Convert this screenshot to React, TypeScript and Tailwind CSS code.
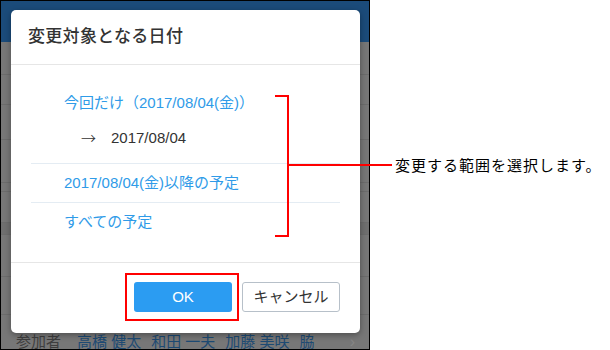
import React from "react";

const jp = { fontFamily: '"Liberation Sans", "Noto Sans CJK JP", sans-serif' };

const bgRows = [33, 30, 35, 43, 9, 31, 12, 42, 38];
const members = ["高橋 健太", "和田 一夫", "加藤 美咲", "脇"];

function Backdrop() {
  return (
    <div className="flex flex-col h-full">
      <div className="h-[41px] shrink-0 bg-[#1b4b7a]" />
      <div className="flex-1 bg-[#777777] flex flex-col">
        {bgRows.map((h, i) => (
          <div
            key={i}
            className={`border-b border-[#6c6c6c] ${i === 6 ? "bg-[#6f6f6f]" : ""}`}
            style={{ height: h }}
          />
        ))}
        <div className="flex items-center pl-[15px] pt-[18px] text-[15px] leading-[18px] whitespace-nowrap">
          <span className="text-[#3e3e3e] mr-[16px]">参加者</span>
          <div className="flex gap-[10px] text-[#1d4a73]">
            {members.map((m) => (
              <span key={m}>{m}</span>
            ))}
          </div>
          <span className="ml-auto mr-[14px] text-[#858585] text-[16px]">›</span>
        </div>
      </div>
    </div>
  );
}

function Modal() {
  return (
    <div className="absolute left-[10px] top-[9px] w-[349px] h-[323px] bg-white rounded-[5px] shadow-[0_2px_6px_rgba(0,0,0,0.35)] flex flex-col overflow-hidden">
      <div className="h-[55px] shrink-0 flex items-center pl-[17px] border-b border-[#e6e6e6]">
        <h2 className="text-[17px] font-medium text-[#333] tracking-[0.3px]">変更対象となる日付</h2>
      </div>

      <div className="pt-[19px] pb-[20px] px-[20px]">
        <div className="border-b border-[#e4ecf3] pb-[10px]">
          <div className="h-[39px] flex items-center pl-[33px] text-[15px] text-[#2f9be8]">
            今回だけ（2017/08/04(金)）
          </div>
          <div className="h-[30px] flex items-center pl-[50px] text-[15px] text-[#333]">
            <span className="w-[30px] font-['Noto_Sans_CJK_JP'] font-light">→</span>
            <span>2017/08/04</span>
          </div>
        </div>
        <div className="h-[39px] border-b border-[#e4ecf3] flex items-center pl-[33px] text-[15px] text-[#2f9be8]">
          2017/08/04(金)以降の予定
        </div>
        <div className="h-[39px] flex items-center pl-[33px] text-[15px] text-[#2f9be8]">
          すべての予定
        </div>
      </div>

      <div className="border-t border-[#e6e6e6] flex justify-end gap-[10px] pt-[19px] pr-[20px]">
        <button className="w-[98px] h-[30px] rounded-[3px] bg-[#2b9cf2] text-white text-[15px]">
          OK
        </button>
        <button className="w-[98px] h-[30px] rounded-[3px] bg-white border border-[#b7c0c9] text-[#333] text-[15px]">
          キャンセル
        </button>
      </div>
    </div>
  );
}

export default function App() {
  return (
    <div className="relative w-[610px] h-[350px] bg-white overflow-hidden" style={jp}>
      <div className="relative w-[370px] h-[350px] border border-black overflow-hidden">
        <Backdrop />
        <Modal />
      </div>

      {/* highlight around OK */}
      <div className="absolute left-[125px] top-[273px] w-[114px] h-[48px] border-2 border-[#ff0000]" />

      {/* bracket */}
      <div className="absolute left-[275px] top-[95px] w-[14px] h-[142px] border-2 border-l-0 border-[#ff0000]" />
      <div className="absolute left-[288px] top-[164px] w-[104px] h-[2px] bg-[#ff0000]" />
      <div className="absolute left-[395px] top-[155px] text-[15px] leading-[22px] tracking-[1px] text-black whitespace-nowrap">
        変更する範囲を選択します。
      </div>
    </div>
  );
}
